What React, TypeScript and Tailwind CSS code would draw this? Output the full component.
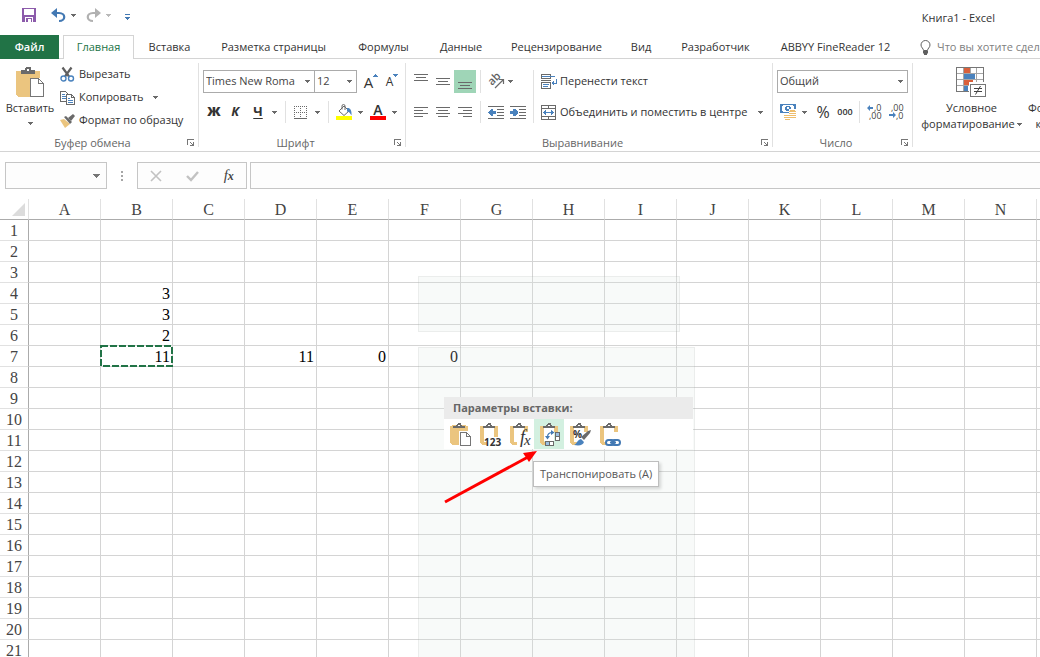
import type { ReactNode } from 'react';
import clsx from 'clsx';

const tabs = [
  { name: 'Вставка', width: 'w-[71px]' },
  { name: 'Разметка страницы', width: 'w-[137px]' },
  { name: 'Формулы', width: 'w-[83px]' },
  { name: 'Данные', width: 'w-[72px]' },
  { name: 'Рецензирование', width: 'w-[119px]' },
  { name: 'Вид', width: 'w-[50px]' },
  { name: 'Разработчик', width: 'w-[99px]' },
  { name: 'ABBYY FineReader 12', width: 'w-[141px]' },
];

const columns = 'ABCDEFGHIJKLMNOPQRSTUVWXYZ'.split('');
const rows = Array.from({ length: 50 }, (_, i) => i + 1);

const cells: Record<string, string> = {
  B4: '3',
  B5: '3',
  B6: '2',
  B7: '11',
  D7: '11',
  E7: '0',
  F7: '0',
};

interface IconProps {
  w: number;
  h: number;
  smooth?: boolean;
  className?: string;
  children: ReactNode;
}

function Icon({ w, h, smooth, className, children }: IconProps) {
  return (
    <svg
      width={w}
      height={h}
      viewBox={`0 0 ${w} ${h}`}
      fill="none"
      shapeRendering={smooth ? 'auto' : 'crispEdges'}
      className={clsx('block shrink-0 overflow-visible', className)}
      aria-hidden="true"
    >
      {children}
    </svg>
  );
}

function Caret({ className = 'text-[#6a6a6a]' }: { className?: string }) {
  return (
    <Icon w={5} h={3} className={className}>
      <path d="M0 0h5v1H4v1H3v1H2V2H1V1H0z" fill="currentColor" />
    </Icon>
  );
}

function CaretButton({ label, className }: { label: string; className?: string }) {
  return (
    <button aria-label={label} className={clsx('flex h-[22px] shrink-0 items-center justify-center', className)}>
      <Caret />
    </button>
  );
}

function Tool({ label, className, children }: { label: string; className?: string; children: ReactNode }) {
  return (
    <button aria-label={label} className={clsx('flex h-[22px] shrink-0 items-center justify-center', className)}>
      {children}
    </button>
  );
}

function Divider({ className }: { className?: string }) {
  return <span className={clsx('w-px shrink-0 self-stretch bg-[#e1e1e1]', className)} />;
}

/* ---------- ribbon icons ---------- */

function PasteIcon() {
  return (
    <Icon w={29} h={31}>
      <path d="M0 4h24v7H14v19H2l-2-2z" fill="#ebc57f" />
      <path d="M5 3h4V1l2-1h3l1 1v2h4v4H5z" fill="#6a6a6a" />
      <path d="M11 2h2v2h-2z" fill="#fff" />
      <path d="M14.500 11.500h8l5 5v13h-13z" fill="#fff" stroke="#767676" />
      <path d="M22.500 11.500v5h5" stroke="#767676" />
    </Icon>
  );
}

function CutIcon() {
  return (
    <Icon w={15} h={15} smooth>
      <path d="M2.500 .5l6.500 9M11.500 .5L5 9.500" stroke="#5f5f5f" strokeWidth="2.200" />
      <circle cx="3.500" cy="11.500" r="2.500" stroke="#4a82bd" strokeWidth="1.400" />
      <circle cx="11" cy="11.500" r="2.500" stroke="#4a82bd" strokeWidth="1.400" />
    </Icon>
  );
}

function CopyIcon() {
  return (
    <Icon w={15} h={14}>
      <path d="M.5 .5h5l2 2v8h-7z" fill="#fff" stroke="#6a6a6a" />
      <path d="M2 3h3v1H2zM2 5h4v1H2zM2 7h4v1H2z" fill="#4a82bd" />
      <path d="M6.500 3.500h5l3 3v7h-8z" fill="#fff" stroke="#6a6a6a" />
      <path d="M11.500 3.500v3h3" stroke="#6a6a6a" />
      <path d="M8 7h2v1H8zM8 9h5v1H8zM8 11h5v1H8z" fill="#4a82bd" />
    </Icon>
  );
}

function BrushIcon() {
  return (
    <Icon w={15} h={14} smooth>
      <path d="M0 6l4-1 6 5-5 4z" fill="#ebc57f" />
      <path d="M4 3l2-1 6 6-2 2z" fill="#6a6a6a" />
      <path d="M8 4l5-4 2 2-4 5z" fill="#6a6a6a" />
    </Icon>
  );
}

function BordersIcon() {
  return (
    <Icon w={13} h={13}>
      <path d="M0 .5h13M0 6.500h13M.5 0v12M6.500 0v12M12.500 0v12" stroke="#6a6a6a" strokeDasharray="1 1" />
      <path d="M0 12.500h13" stroke="#6a6a6a" />
    </Icon>
  );
}

function FillIcon() {
  return (
    <Icon w={16} h={16} smooth>
      <path d="M3 7l5-5 5 5-5 4.500z" fill="#fff" stroke="#6a6a6a" />
      <path d="M6 5.500V2a1.500 1.500 0 013 0v4" stroke="#6a6a6a" />
      <path d="M11 4c3-.5 5 2 4.500 7.500C14 9 13.500 8 11 7.500z" fill="#4a82bd" />
      <path d="M0 12h16v4H0z" fill="#ff0" />
    </Icon>
  );
}

const lineWidths = {
  left: ['M0 .5h14', 'M0 3.500h9', 'M0 6.500h14', 'M0 9.500h9'],
  center: ['M0 .5h14', 'M2 3.500h10', 'M0 6.500h14', 'M2 9.500h10'],
  right: ['M0 .5h14', 'M5 3.500h9', 'M0 6.500h14', 'M5 9.500h9'],
};

function HAlignIcon({ kind }: { kind: keyof typeof lineWidths }) {
  return (
    <Icon w={14} h={10}>
      <path d={lineWidths[kind].join('')} stroke="#6a6a6a" />
    </Icon>
  );
}

function VAlignIcon({ className }: { className?: string }) {
  return (
    <Icon w={14} h={7} className={className}>
      <path d="M0 .5h14M2 3.500h10M0 6.500h14" stroke="#6a6a6a" />
    </Icon>
  );
}

function IndentIcon({ out }: { out?: boolean }) {
  return (
    <Icon w={16} h={13}>
      <path d="M0 .5h16M9 3.500h7M9 6.500h7M9 9.500h7M0 12.500h16" stroke="#6a6a6a" />
      {out ? (
        <path d="M0 6l3-3h2v2h3v3H5v2H3L0 7z" fill="#4a82bd" />
      ) : (
        <path d="M8 6L5 3H3v2H0v3h3v2h2l3-3z" fill="#4a82bd" />
      )}
    </Icon>
  );
}

function OrientationIcon() {
  return (
    <Icon w={16} h={16} smooth>
      <text transform="translate(4 13) rotate(-45)" fill="#5f5f5f" className="font-['Open_Sans'] text-[11px] font-semibold">
        ab
      </text>
      <path d="M7 15l8-8M11 6.500h4.500V11" stroke="#6a6a6a" strokeWidth="1.200" />
    </Icon>
  );
}

function WrapIcon() {
  return (
    <Icon w={16} h={15}>
      <path d="M.5 .5h9v4h-9zM.5 8.500h9v6h-9z" stroke="#6a6a6a" />
      <path d="M0 6.500h10" stroke="#6a6a6a" />
      <path d="M1 2.500h13M2 10.500h6M2 12.500h5" stroke="#4a82bd" />
      <path d="M15 5v4h-3" stroke="#4a82bd" />
      <path d="M10 9l3-3v6z" fill="#4a82bd" />
    </Icon>
  );
}

function MergeIcon() {
  return (
    <Icon w={16} h={15}>
      <path d="M.5 .5h14v14H.5zM0 3.500h15M0 11.500h15M7.500 0v3M7.500 12v3" stroke="#6a6a6a" />
      <path d="M3 7.500h9" stroke="#4a82bd" />
      <path d="M2 7l3-2v5L2 8zM13 7l-3-2v5l3-2z" fill="#4a82bd" />
    </Icon>
  );
}

function MoneyIcon() {
  return (
    <Icon w={17} h={16}>
      <path d="M0 0h16v9H0z" fill="#4a82bd" />
      <path d="M2 2h1V1h10v1h1v5h-1v1H3V7H2z" fill="#fff" />
      <path d="M6 2h4v1h1v3h-1v1H6V6H5V3h1z" fill="#4a82bd" />
      <path d="M7 3h2v2H7z" fill="#fff" />
      <path d="M9 5h7v9h-4v2H4v-6h5z" fill="#fff" />
      <path d="M10 6h5v1h1v1H9V7h1zM9 9h7v1H9zM9 11h7v1H9zM11 13h5v1h-5zM4 11h5v1H4zM4 13h7v1H4zM5 15h5v1H5z" fill="#eebd6c" />
    </Icon>
  );
}

function DecimalIcon({ more }: { more?: boolean }) {
  return (
    <Icon w={15} h={16} smooth>
      <text x={more ? 7 : 2} y="7" fill="#444" className="font-['Open_Sans'] text-[9px]">
        {more ? ',0' : ',00'}
      </text>
      <text x={more ? 2 : 7} y="15" fill="#444" className="font-['Open_Sans'] text-[9px]">
        {more ? ',00' : ',0'}
      </text>
      {more ? (
        <path d="M0 4l3-3v2h3v2H3v2z" fill="#4a82bd" />
      ) : (
        <path d="M7 11L4 8v2H0v2h4v2z" fill="#4a82bd" />
      )}
    </Icon>
  );
}

function ConditionalIcon() {
  return (
    <Icon w={31} h={31}>
      <path d="M.5 .5h27v24H.5z" fill="#fff" />
      <path d="M0 6.500h28M0 12.500h28M0 18.500h28M7.500 0v25M14.500 0v25M20.500 0v25" stroke="#a6a6a6" />
      <path d="M8 1h6v5H8zM8 13h9v5H8z" fill="#d9603b" />
      <path d="M8 7h11v5H8zM8 19h4v5H8z" fill="#4a82bd" />
      <path d="M.5 .5h27v24H.5z" stroke="#767676" />
      <path d="M13 15h18v16H13z" fill="#fff" />
      <path d="M14.500 17.500h15v12h-15z" fill="#fff" stroke="#767676" />
      <path d="M18 21.500h8M18 24.500h8" stroke="#444" />
      <path d="M24.500 19l-5 8.500" stroke="#444" shapeRendering="auto" />
    </Icon>
  );
}

function LauncherButton({ label }: { label: string }) {
  return (
    <button aria-label={label} className="p-0.5">
      <Icon w={8} h={8}>
        <path d="M.5 6V.5H7" stroke="#767676" />
        <path d="M3 3l3 3" stroke="#767676" />
        <path d="M7 3v4H3V6h2V5h1V3z" fill="#767676" />
      </Icon>
    </button>
  );
}

/* ---------- ribbon ---------- */

interface GroupProps {
  title: string;
  width: string;
  children: ReactNode;
}

function Group({ title, width, children }: GroupProps) {
  return (
    <section aria-label={title} className={clsx('flex shrink-0', width)}>
      <div className="flex min-w-0 flex-1 flex-col">
        <div className="flex-1">{children}</div>
        <div className="flex h-4 items-center">
          <span className="flex-1 text-center leading-4 text-[#666]">{title}</span>
          <LauncherButton label={`${title}: параметры`} />
        </div>
      </div>
      <Divider className="my-1 ml-px" />
    </section>
  );
}

interface DropBoxProps {
  label: string;
  value: string;
  className?: string;
}

function DropBox({ label, value, className }: DropBoxProps) {
  return (
    <div className={clsx('relative h-[23px] shrink-0 border border-[#ababab] bg-white', className)}>
      <select aria-label={label} className="block h-full w-full appearance-none pl-0.5 text-[#444] outline-none">
        <option>{value}</option>
      </select>
      <span className="pointer-events-none absolute inset-y-0 right-1 flex items-center">
        <Caret />
      </span>
    </div>
  );
}

function ClipboardGroup() {
  return (
    <Group title="Буфер обмена" width="w-[199px]">
      <div className="flex">
        <button className="flex w-[60px] flex-col items-center pt-2">
          <PasteIcon />
          <span className="mt-0.5 leading-4">Вставить</span>
          <span className="mt-1.5">
            <Caret />
          </span>
        </button>
        <div className="flex flex-col pt-1">
          <button className="flex h-[23px] items-center gap-1">
            <CutIcon />
            Вырезать
          </button>
          <div className="flex h-[23px] items-center">
            <button className="flex items-center gap-1">
              <CopyIcon />
              Копировать
            </button>
            <CaretButton label="Варианты копирования" className="w-6" />
          </div>
          <button className="flex h-[23px] items-center gap-1 whitespace-nowrap">
            <BrushIcon />
            Формат по образцу
          </button>
        </div>
      </div>
    </Group>
  );
}

function FontGroup() {
  return (
    <Group title="Шрифт" width="w-[207px]">
      <div className="flex flex-col gap-2 pt-[11px] pl-1">
        <div className="flex">
          <DropBox label="Шрифт" value="Times New Roma" className="w-[112px]" />
          <DropBox label="Размер шрифта" value="12" className="-ml-px w-[43px]" />
          <Tool label="Увеличить размер" className="ml-1 w-5 items-start pt-0.5">
            <span className="text-[15px] leading-5">A</span>
            <Icon w={5} h={3} className="mt-0.5">
              <path d="M2 0h1v1h1v1h1v1H0V2h1V1h1z" fill="#4a82bd" />
            </Icon>
          </Tool>
          <Tool label="Уменьшить размер" className="w-[22px] items-start pt-0.5">
            <span className="text-xs leading-5">A</span>
            <Icon w={5} h={3} className="mt-0.5 text-[#4a82bd]">
              <path d="M0 0h5v1H4v1H3v1H2V2H1V1H0z" fill="currentColor" />
            </Icon>
          </Tool>
        </div>
        <div className="flex h-[22px]">
          <Tool label="Полужирный" className="w-[22px] text-[13px] font-extrabold">Ж</Tool>
          <Tool label="Курсив" className="w-5 text-[13px] font-bold italic">К</Tool>
          <Tool label="Подчеркнутый" className="w-[26px] text-[13px] font-bold underline underline-offset-2">Ч</Tool>
          <CaretButton label="Варианты подчеркивания" className="w-[7px]" />
          <Divider className="ml-[7px]" />
          <Tool label="Границы" className="ml-2 w-[13px]"><BordersIcon /></Tool>
          <CaretButton label="Варианты границ" className="w-[21px]" />
          <Divider />
          <Tool label="Цвет заливки" className="ml-[7px] w-4"><FillIcon /></Tool>
          <CaretButton label="Выбор цвета заливки" className="w-4" />
          <Tool label="Цвет текста" className="ml-0.5 w-4 flex-col">
            <span className="h-3 text-sm leading-3 font-semibold">A</span>
            <span className="h-1 w-4 bg-[#f00]" />
          </Tool>
          <CaretButton label="Выбор цвета текста" className="w-4" />
        </div>
      </div>
    </Group>
  );
}

function AlignmentGroup() {
  return (
    <Group title="Выравнивание" width="w-[367px]">
      <div className="flex pt-[11px] pl-1">
        <div className="flex shrink-0 flex-col gap-2">
          <div className="flex h-[23px]">
            <Tool label="По верхнему краю" className="w-[22px]"><VAlignIcon className="mb-2" /></Tool>
            <Tool label="По середине" className="w-[22px]"><VAlignIcon /></Tool>
            <Tool label="По нижнему краю" className="h-[23px] w-[22px] bg-[#9fd5b7]"><VAlignIcon className="mt-2" /></Tool>
            <Divider className="ml-1" />
            <Tool label="Ориентация" className="ml-[7px] w-4"><OrientationIcon /></Tool>
            <CaretButton label="Варианты ориентации" className="w-[13px]" />
          </div>
          <div className="flex h-[22px]">
            <Tool label="По левому краю" className="w-[22px]"><HAlignIcon kind="left" /></Tool>
            <Tool label="По центру" className="w-[22px]"><HAlignIcon kind="center" /></Tool>
            <Tool label="По правому краю" className="w-[22px]"><HAlignIcon kind="right" /></Tool>
            <Divider className="ml-1" />
            <Tool label="Уменьшить отступ" className="ml-1 w-[22px]"><IndentIcon out /></Tool>
            <Tool label="Увеличить отступ" className="w-[22px]"><IndentIcon /></Tool>
          </div>
        </div>
        <Divider className="ml-1" />
        <div className="flex flex-1 flex-col gap-2 pr-[3px] pl-[7px]">
          <button className="flex h-[23px] items-center gap-[3px]">
            <WrapIcon />
            Перенести текст
          </button>
          <div className="flex h-[22px] items-center justify-between">
            <button className="flex items-center gap-[3px] whitespace-nowrap">
              <MergeIcon />
              Объединить и поместить в центре
            </button>
            <CaretButton label="Варианты объединения" className="w-4" />
          </div>
        </div>
      </div>
    </Group>
  );
}

function NumberGroup() {
  return (
    <Group title="Число" width="w-[140px]">
      <div className="flex flex-col gap-2 pt-[11px] pl-1">
        <DropBox label="Числовой формат" value="Общий" className="w-[131px]" />
        <div className="flex h-[22px]">
          <Tool label="Финансовый формат" className="ml-[3px] w-[17px]"><MoneyIcon /></Tool>
          <CaretButton label="Валюта" className="w-[15px]" />
          <Tool label="Процентный формат" className="w-[22px] text-base">%</Tool>
          <Tool label="Формат с разделителями" className="w-[22px] text-[9px] font-semibold">000</Tool>
          <Divider className="ml-[3px]" />
          <Tool label="Увеличить разрядность" className="ml-[3px] w-[22px]"><DecimalIcon more /></Tool>
          <Tool label="Уменьшить разрядность" className="w-[22px]"><DecimalIcon /></Tool>
        </div>
      </div>
    </Group>
  );
}

function StylesGroup() {
  return (
    <section aria-label="Стили" className="flex shrink-0 items-start pt-2">
      <button className="flex w-[117px] flex-col items-center whitespace-nowrap">
        <ConditionalIcon />
        <span className="mt-0.5 leading-4">Условное</span>
        <span className="flex items-center gap-0.5 leading-4">
          форматирование <Caret />
        </span>
      </button>
      <button className="flex w-[82px] flex-col items-center pt-[33px] whitespace-nowrap">
        <span className="leading-4">Форматировать</span>
        <span className="flex items-center gap-0.5 leading-4">
          как таблицу <Caret />
        </span>
      </button>
    </section>
  );
}

function TitleBar() {
  return (
    <header className="flex h-[35px] shrink-0 items-start">
      <div className="flex h-[30px] items-center pl-[22px]">
        <button aria-label="Сохранить">
          <Icon w={14} h={14}>
            <path d="M0 0h14v14H0z" fill="#8c5bab" />
            <path d="M2 1h10v6H2zM3 9h8v5H3z" fill="#fff" />
            <path d="M4 10h6v4H4z" fill="#8c5bab" />
            <path d="M6 11h3v3H6z" fill="#fff" />
          </Icon>
        </button>
        <button aria-label="Отменить" className="ml-[15px]">
          <Icon w={15} h={14} smooth>
            <path d="M2 5h6c7 0 7 8 0 8" stroke="#4379b3" strokeWidth="2.200" />
            <path d="M6 0v10L0 5z" fill="#4379b3" />
          </Icon>
        </button>
        <button aria-label="Список отмены" className="ml-[5px]">
          <Caret />
        </button>
        <button aria-label="Повторить" className="ml-[10px]">
          <Icon w={15} h={14} smooth>
            <path d="M13 5H7C0 5 0 13 7 13" stroke="#b1b1b1" strokeWidth="2.200" />
            <path d="M9 0v10l6-5z" fill="#b1b1b1" />
          </Icon>
        </button>
        <button aria-label="Список повтора" className="ml-[5px]">
          <Caret className="text-[#b9b9b9]" />
        </button>
        <button aria-label="Настройка панели быстрого доступа" className="mt-1 ml-[14px]">
          <Icon w={5} h={6}>
            <path d="M0 0h5v1H0zM0 3h5v1H4v1H3v1H2V5H1V4H0z" fill="#4379b3" />
          </Icon>
        </button>
      </div>
      <h1 className="ml-auto pt-[10px] pr-[45px] leading-4">Книга1 - Excel</h1>
    </header>
  );
}

function TabBar() {
  return (
    <nav className="flex h-6 shrink-0 items-stretch border-b border-[#d4d4d4] whitespace-nowrap">
      <button className="-mb-px w-[59px] shrink-0 bg-[#217346] pt-px font-semibold text-white">Файл</button>
      <button className="-mb-px ml-1 w-[71px] shrink-0 border border-b-0 border-[#d4d4d4] bg-white text-[#217346]">
        Главная
      </button>
      {tabs.map((tab) => (
        <button key={tab.name} className={clsx('shrink-0 pt-0.5', tab.width)}>
          {tab.name}
        </button>
      ))}
      <button className="ml-[14px] flex shrink-0 items-center gap-1.5 pt-px text-[#808080]">
        <Icon w={11} h={15} smooth>
          <path d="M3.500 10.500C3.500 8.500 1 7.500 1 5a4.500 4.500 0 019 0c0 2.500-2.500 3.500-2.500 5.500z" stroke="#5f5f5f" />
          <path d="M3 11h5v2.500H7V15H4v-1.500H3z" fill="#5f5f5f" />
        </Icon>
        Что вы хотите сделать?
      </button>
    </nav>
  );
}

function FormulaBar() {
  return (
    <div className="flex h-[47px] shrink-0 items-start pt-[10px] pl-[5px]">
      <div className="relative h-[27px] w-[102px] shrink-0 border border-[#c6c6c6] bg-[#fdfdfd]">
        <input aria-label="Имя" className="h-full w-full pr-5 pl-1 outline-none" />
        <button aria-label="Список имен" className="absolute inset-y-0 right-1.5 flex items-center">
          <Icon w={7} h={4}>
            <path d="M0 0h7v1H6v1H5v1H4v1H3V3H2V2H1V1H0z" fill="#767676" />
          </Icon>
        </button>
      </div>
      <div className="flex h-[27px] w-[30px] shrink-0 items-center justify-center">
        <Icon w={2} h={10}>
          <path d="M0 0h2v2H0zM0 4h2v2H0zM0 8h2v2H0z" fill="#a6a6a6" />
        </Icon>
      </div>
      <div className="flex h-[27px] w-[110px] shrink-0 items-center justify-around border border-[#c6c6c6] bg-[#fdfdfd]">
        <button aria-label="Отмена">
          <Icon w={12} h={12} smooth>
            <path d="M1 1l10 10M11 1L1 11" stroke="#c2c2c2" strokeWidth="1.600" />
          </Icon>
        </button>
        <button aria-label="Ввод">
          <Icon w={13} h={12} smooth>
            <path d="M1 6l4 4 7-8" stroke="#c2c2c2" strokeWidth="2.400" />
          </Icon>
        </button>
        <button aria-label="Вставить функцию" className="pb-0.5 font-['Liberation_Serif',serif] text-[15px] leading-5 text-[#444] italic">
          f<span className="text-xs font-bold">x</span>
        </button>
      </div>
      <input
        aria-label="Строка формул"
        className="ml-[3px] h-[27px] min-w-0 flex-1 border border-r-0 border-[#c6c6c6] bg-[#fdfdfd] px-1 outline-none"
      />
    </div>
  );
}

/* ---------- sheet ---------- */

function Sheet() {
  return (
    <table className="w-0 table-fixed border-separate border-spacing-0 font-['Liberation_Serif',serif] text-base leading-[18px] text-black">
      <colgroup>
        <col className="w-[29px]" />
        {columns.map((col) => (
          <col key={col} className="w-[72px]" />
        ))}
      </colgroup>
      <thead>
        <tr className="h-[21px]">
          <th aria-label="Выделить все" className="border-r border-b border-r-[#e1e1e1] border-b-[#ababab] p-0">
            <Icon w={13} h={13} smooth className="ml-3">
              <path d="M13 0v13H0z" fill="#dcdcdc" />
            </Icon>
          </th>
          {columns.map((col) => (
            <th key={col} className="border-r border-b border-r-[#e1e1e1] border-b-[#ababab] p-0 pt-0.5 font-normal text-[#444]">
              {col}
            </th>
          ))}
        </tr>
      </thead>
      <tbody>
        {rows.map((row) => (
          <tr key={row} className="h-[21px]">
            <th className="border-r border-b border-r-[#ababab] border-b-[#e1e1e1] p-0 pt-0.5 font-normal text-[#444]">{row}</th>
            {columns.map((col) => (
              <td key={col} className="border-r border-b border-[#d4d4d4] p-0 pt-0.5 pr-0.5 text-right">
                {cells[col + row]}
              </td>
            ))}
          </tr>
        ))}
      </tbody>
    </table>
  );
}

/* ---------- paste options ---------- */

function Board({ children, solid }: { children?: ReactNode; solid?: boolean }) {
  return (
    <Icon w={24} h={24}>
      {solid ? (
        <path d="M1 3h18v19H3l-2-2z" fill="#ebc57f" />
      ) : (
        <path d="M1 3h4v16h3v3H3l-2-2zM15 3h4v6h-4z" fill="#ebc57f" />
      )}
      <path d="M3 2h14v5H3z" fill={solid ? '#ebc57f' : '#fff'} fillOpacity={solid ? 1 : 0} />
      <path d="M4 3h3V2h1V1l1-1h2l1 1v1h1v1h3v2H4z" fill="#6a6a6a" />
      <path d="M9 2h2v1H9z" fill="#fff" />
      {children}
    </Icon>
  );
}

const pasteOptions = [
  {
    label: 'Вставить (П)',
    icon: (
      <Board solid>
        <path d="M10 8h14v16H10z" fill="#fff" />
        <path d="M11.500 9.500h6l4 4v9h-10z" fill="#fff" stroke="#767676" />
        <path d="M17.500 9.500v4h4" stroke="#767676" />
      </Board>
    ),
  },
  {
    label: 'Значения (З)',
    icon: (
      <Board>
        <path d="M15 9h4v5h-4z" fill="#ebc57f" />
        <text x="5" y="23" fill="#333" className="font-['Open_Sans'] text-[10px] font-bold">123</text>
      </Board>
    ),
  },
  {
    label: 'Формулы (Ф)',
    icon: (
      <Board>
        <text x="11" y="20" fill="#333" className="font-['Liberation_Serif'] text-[18px] italic">f</text>
        <text x="15" y="22" fill="#333" className="font-['Liberation_Serif'] text-[15px] italic">x</text>
      </Board>
    ),
  },
  {
    label: 'Транспонировать (А)',
    icon: (
      <Board>
        <path d="M5 5h10v13H5z" fill="#fff" />
        <path d="M16.500 9.500h4v8h-4z" fill="#fff" stroke="#6a6a6a" />
        <path d="M17 10h3v3h-3z" fill="#9bbfe2" />
        <path d="M16 13.500h5" stroke="#6a6a6a" />
        <path d="M6.500 18.500h8v4h-8z" fill="#fff" stroke="#6a6a6a" />
        <path d="M7 19h3v3H7z" fill="#9bbfe2" />
        <path d="M10.500 18v5" stroke="#6a6a6a" />
        <path d="M8.500 14c0-3 2-4.500 5-4.500" stroke="#4379b3" strokeWidth="1.200" shapeRendering="auto" />
        <path d="M12 7l3.500 2.500-3.500 2.500zM6 13h5l-2.500 3.500z" fill="#4379b3" shapeRendering="auto" />
      </Board>
    ),
    active: true,
  },
  {
    label: 'Форматирование (Ф)',
    icon: (
      <Board>
        <text x="4" y="15" fill="#333" className="font-['Open_Sans'] text-[10px] font-bold">%</text>
        <path d="M12 14l7-6 3-1-1 3-6 7z" fill="#6a6a6a" shapeRendering="auto" />
        <path d="M5 22c3-1 3-5 7-6l3 3c-1 3-4 4-10 3z" fill="#4a82bd" shapeRendering="auto" />
      </Board>
    ),
  },
  {
    label: 'Вставить связь (Ь)',
    icon: (
      <Board>
        <g stroke="#4379b3" strokeWidth="2" shapeRendering="auto">
          <rect x="7" y="17" width="8" height="5" rx="2.500" fill="#fff" />
          <rect x="13" y="17" width="8" height="5" rx="2.500" />
          <path d="M11 19.500h6" />
        </g>
      </Board>
    ),
  },
];

function PasteMenu() {
  return (
    <div role="menu" className="absolute top-[198px] left-[444px] w-[249px]">
      <div className="h-[22px] bg-[#ebebeb] pl-[9px] leading-[22px] font-bold text-[#666]">Параметры вставки:</div>
      <div className="flex bg-white">
        {pasteOptions.map((option) => (
          <button
            key={option.label}
            role="menuitem"
            aria-label={option.label}
            className={clsx('flex size-[30px] items-center justify-center pt-0.5 pl-1', option.active && 'bg-[#d3f0e0]')}
          >
            {option.icon}
          </button>
        ))}
      </div>
      <div
        role="tooltip"
        className="absolute top-16 left-[89px] border border-[#bebebe] bg-white px-1.5 leading-6 whitespace-nowrap text-[#575757] shadow-[2px_2px_3px_rgba(0,0,0,0.15)]"
      >
        Транспонировать (А)
      </div>
      <Icon w={96} h={56} smooth className="absolute top-[52px] left-0">
        <path d="M1 53L84 8" stroke="#f00" strokeWidth="3" />
        <path d="M93 2L85 13 79 4z" fill="#f00" />
      </Icon>
    </div>
  );
}

export default function App() {
  return (
    <div className="flex h-screen flex-col overflow-hidden bg-white font-['Open_Sans','Noto_Sans',sans-serif] text-[11px] text-[#333]">
      <TitleBar />
      <TabBar />
      <div className="flex h-[93px] shrink-0 overflow-hidden border-b border-[#d4d4d4]">
        <ClipboardGroup />
        <FontGroup />
        <AlignmentGroup />
        <NumberGroup />
        <StylesGroup />
      </div>
      <FormulaBar />
      <main className="relative min-h-0 flex-1 overflow-hidden">
        <Sheet />

        {/* Copied range outline */}
        <Icon w={74} h={23} className="absolute top-[146px] left-[100px]">
          <rect x="1" y="1" width="71" height="20" stroke="#217346" strokeWidth="2" strokeDasharray="7 2" />
        </Icon>

        {/* Faded menu panels behind the paste options */}
        <div className="absolute top-[77px] left-[418px] h-[56px] w-[262px] border border-black/5 bg-[#dce6e1]/20" />
        <div className="absolute top-[148px] bottom-0 left-[418px] w-[277px] border border-b-0 border-black/5 bg-[#dce6e1]/20" />
        <PasteMenu />
      </main>
    </div>
  );
}
